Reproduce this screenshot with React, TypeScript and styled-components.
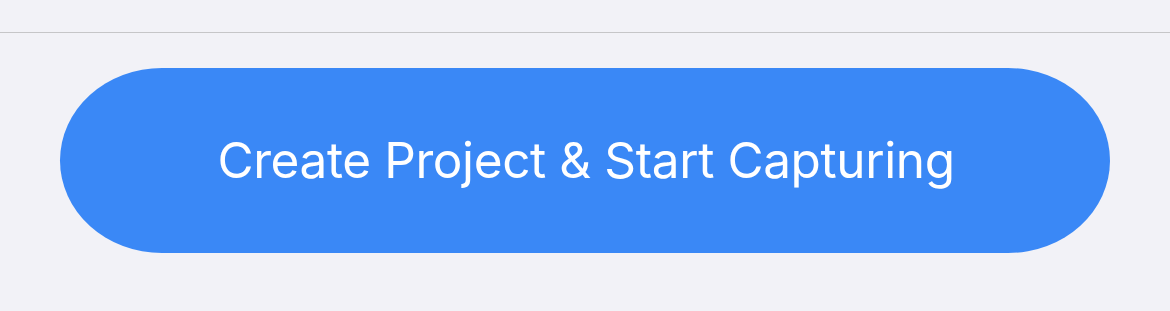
import React from "react";
import styled, { createGlobalStyle } from "styled-components";

const Global = createGlobalStyle`
  html, body { margin: 0; padding: 0; background: #F2F2F7; }
  body { font-family: Inter, "Noto Sans", sans-serif; }
`;

const Page = styled.div`
  width: 1170px;
  height: 311px;
  background: #F2F2F7;
  display: flex;
  flex-direction: column;
`;

const TopBar = styled.div`
  height: 32px;
  border-bottom: 1px solid #C6C6C8;
`;

const Footer = styled.div`
  padding: 35px 60px 0 60px;
`;

const PrimaryButton = styled.button`
  width: 100%;
  height: 185px;
  border: none;
  border-radius: 102px / 92.5px;
  background: #3A88F6;
  color: #ffffff;
  font-family: Inter, "Noto Sans", sans-serif;
  font-size: 49.5px;
  font-weight: 400;
  letter-spacing: -0.4px;
  display: flex;
  align-items: center;
  justify-content: center;
  padding: 0 0 2px 2px;
  cursor: pointer;
`;

export default function App() {
  return (
    <>
      <Global />
      <Page>
        <TopBar />
        <Footer>
          <PrimaryButton>Create Project &amp; Start Capturing</PrimaryButton>
        </Footer>
      </Page>
    </>
  );
}
